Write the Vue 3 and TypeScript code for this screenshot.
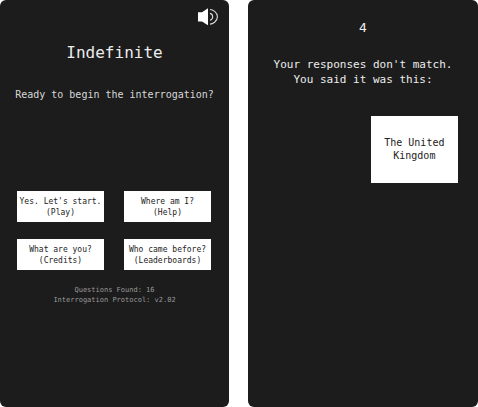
<script setup lang="ts">
import { ref } from 'vue'

interface MenuItem {
  line: string
  target: string
}

const menu: MenuItem[] = [
  { line: "Yes. Let's start.", target: '(Play)' },
  { line: 'Where am I?', target: '(Help)' },
  { line: 'What are you?', target: '(Credits)' },
  { line: 'Who came before?', target: '(Leaderboards)' },
]

const soundOn = ref(true)
</script>

<template>
  <main class="screens">
    <section class="screen">
      <header class="bar">
        <button class="sound" type="button" aria-label="Sound" :aria-pressed="soundOn" @click="soundOn = !soundOn">
          <svg viewBox="0 0 21 18" width="21" height="18" aria-hidden="true">
            <path d="M0 4.2H4L10 0.3V17.3L4 13.6H0Z" fill="#fff" />
            <g v-if="soundOn" fill="none" stroke="#dcdcdc" stroke-width="1.1">
              <path d="M12 5.4A3.5 3.5 0 0 1 12 12.2" />
              <path d="M12 1.5C14.5 1.5 19.4 4 19.4 8.8S14.5 16.1 12 16.1" />
            </g>
          </svg>
        </button>
      </header>
      <h1 class="title">Indefinite</h1>
      <p class="prompt">Ready to begin the interrogation?</p>
      <nav class="menu">
        <button v-for="item in menu" :key="item.target" class="choice" type="button">
          {{ item.line }}<br />{{ item.target }}
        </button>
      </nav>
      <footer class="info">Questions Found: 16<br />Interrogation Protocol: v2.02</footer>
    </section>

    <section class="screen">
      <p class="count">4</p>
      <p class="message">Your responses don't match.<br />You said it was this:</p>
      <button class="answer" type="button">The United Kingdom</button>
    </section>
  </main>
</template>

<style>
body {
  margin: 0;
  background: #fff;
}
</style>

<style scoped>
.screens {
  display: grid;
  grid-template-columns: 229fr 230fr;
  gap: 19px;
  min-height: 100vh;
  font-family: "DejaVu Sans Mono", monospace;
}

.screen {
  display: flex;
  flex-direction: column;
  box-sizing: border-box;
  padding: 8px 18px;
  border-radius: 6px;
  background: #1c1c1c;
  color: #ececec;
  text-align: center;
}

h1,
p {
  margin: 0;
  font-weight: 400;
}

button {
  font-family: inherit;
  border: 0;
  border-radius: 0;
  cursor: pointer;
}

.bar {
  display: flex;
  justify-content: flex-end;
  margin-right: -8px;
}

.sound {
  display: flex;
  padding: 0;
  background: none;
}

.title {
  margin-top: 15px;
  font-size: 16px;
  line-height: 24px;
}

.prompt {
  margin: 23px -10px 0;
  font-size: 10px;
  line-height: 14px;
  color: #d8d8d8;
}

.menu {
  display: grid;
  grid-template-columns: 1fr 1fr;
  gap: 17px 20px;
  margin: 89px 0 0 -1px;
}

.choice {
  padding: 5px 0 4px;
  background: #fff;
  color: #222;
  font-size: 8px;
  line-height: 11px;
  white-space: nowrap;
}

.info {
  margin-top: 15px;
  font-size: 7px;
  line-height: 10px;
  color: #999;
}

.count {
  margin-top: 12px;
  font-size: 13px;
  line-height: 16px;
}

.message {
  margin-top: 21px;
  font-size: 11px;
  line-height: 15px;
}

.answer {
  align-self: flex-end;
  width: 45%;
  margin: 29px 2px 0;
  padding: 20px 8px 21px;
  background: #fff;
  color: #222;
  font-size: 10px;
  line-height: 13px;
}
</style>
